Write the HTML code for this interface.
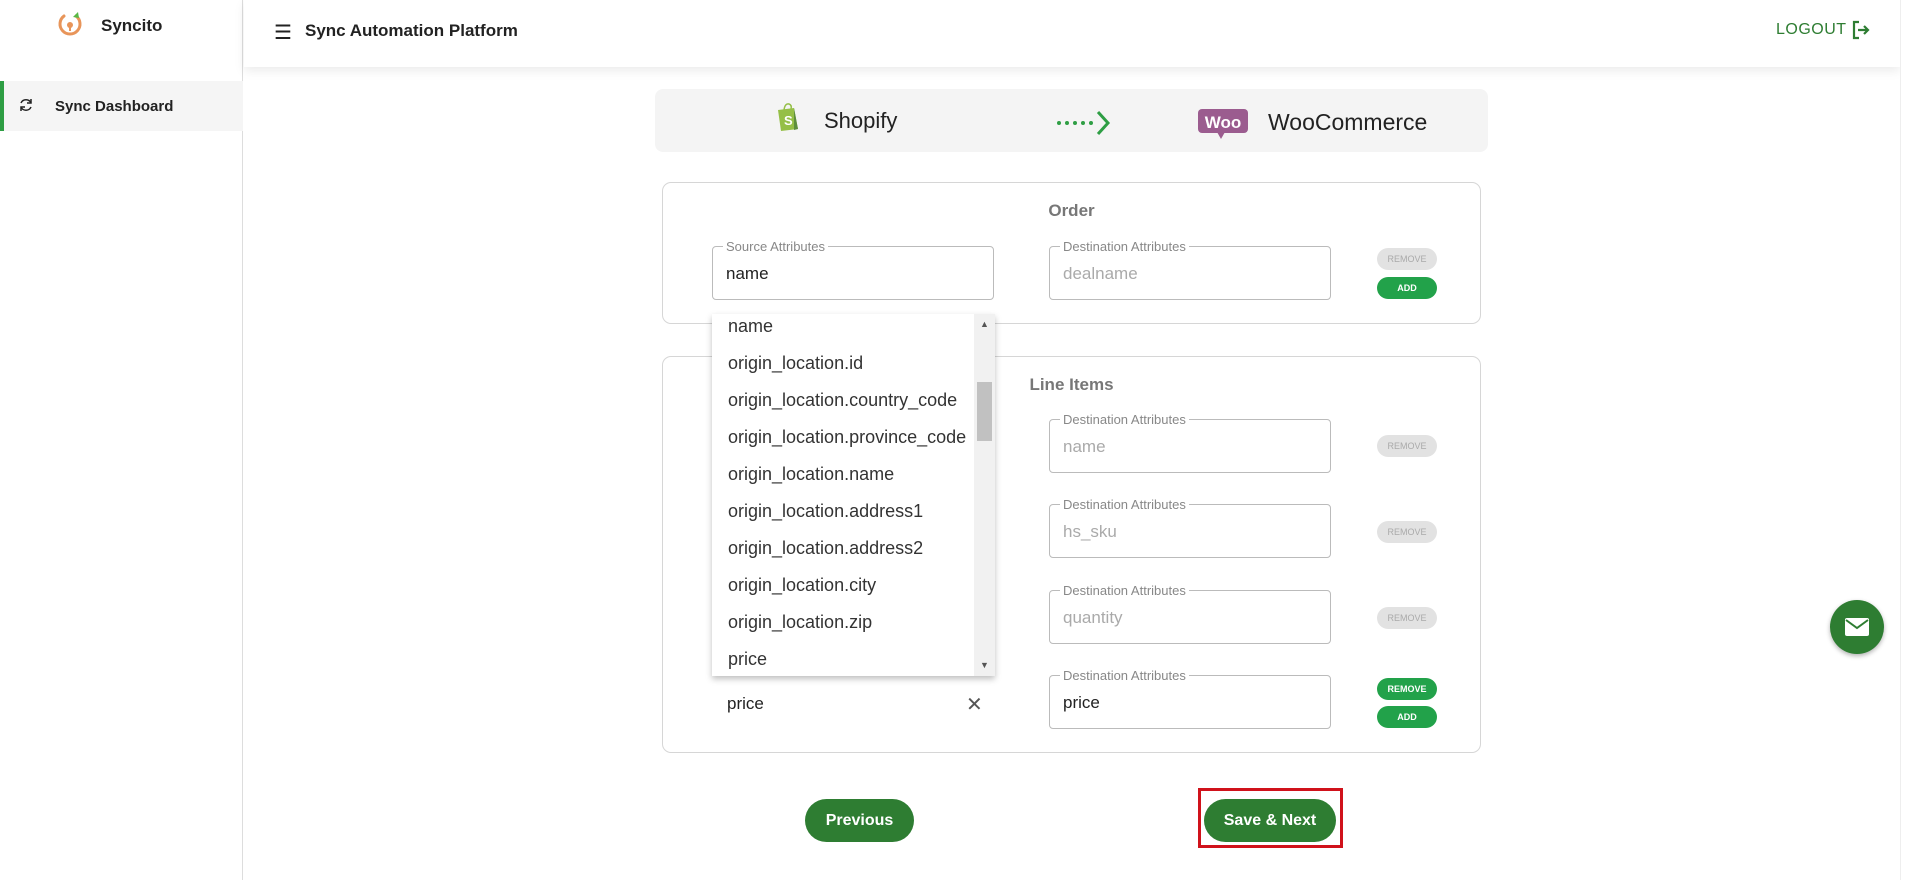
<!DOCTYPE html>
<html><head><meta charset="utf-8"><style>
*{box-sizing:border-box;margin:0;padding:0}
body{width:1916px;height:880px;overflow:hidden;background:#fff;font-family:"Liberation Sans",Arial,sans-serif;position:relative;color:#222}
.abs{position:absolute}
.side{left:0;top:0;width:243px;height:880px;border-right:1px solid #ddd;background:#fff}
.hdr{left:244px;top:0;width:1656px;height:67px;background:#fff;box-shadow:0 4px 10px rgba(0,0,0,.08)}
.field{position:absolute;border:1px solid #bbb;border-radius:4px;height:54px;width:282px}
.field .lab{position:absolute;top:-8px;left:10px;background:#fff;padding:0 3px;font-size:13px;color:#888;line-height:15px}
.field .val{position:absolute;left:13px;top:17px;font-size:17px;color:#222}
.field.dis .val{color:#aaa}
.btn{position:absolute;width:60px;height:22px;border-radius:11px;font-size:9px;font-weight:bold;color:#fff;text-align:center;line-height:22px;background:#22a24a}
.btn.g{background:#e2e2e2;color:#aaa;font-weight:normal}
.card{position:absolute;left:662px;width:819px;border:1px solid #d6d6d6;border-radius:9px;background:#fff}
.ttl{position:absolute;left:0;width:100%;text-align:center;font-size:17px;font-weight:bold;color:#777}
.dd{left:712px;top:314px;width:283px;height:362px;background:#fff;box-shadow:0 3px 6px rgba(0,0,0,.25);overflow:hidden}
.dd div.it{position:absolute;left:16px;font-size:18px;color:#333;white-space:nowrap}
.pb{position:absolute;height:43px;border-radius:22px;background:#2e7d32;color:#fff;font-weight:bold;font-size:16px;text-align:center;line-height:43px}
</style></head><body>
<div class="abs side"></div>
<svg class="abs" style="left:56px;top:10px" width="30" height="28" viewBox="0 0 30 28"><path d="M8 6 A10 10 0 1 0 20 6" fill="none" stroke="#e8955a" stroke-width="3" stroke-linecap="round"/><circle cx="14" cy="15" r="3" fill="#e8955a"/><rect x="13" y="15" width="2" height="6" fill="#e8955a"/><path d="M17 7 L22 2 L23 8 Z" fill="#58b947"/></svg>
<div class="abs" style="left:101px;top:16px;font-size:17px;font-weight:bold">Syncito</div>
<div class="abs" style="left:0;top:81px;width:243px;height:50px;background:#f5f5f5"></div>
<div class="abs" style="left:0;top:81px;width:4px;height:50px;background:#2e9e44"></div>
<svg class="abs" style="left:18px;top:97px" width="16" height="16" viewBox="0 0 16 16"><path d="M13 6 A5.5 5.5 0 0 0 3 6 M3 10 A5.5 5.5 0 0 0 13 10" fill="none" stroke="#222" stroke-width="1.5"/><path d="M13 2 V6 H9 M3 14 V10 H7" fill="none" stroke="#222" stroke-width="1.5"/></svg>
<div class="abs" style="left:55px;top:98px;font-size:15px;font-weight:bold">Sync Dashboard</div>

<div class="abs hdr"></div>
<div class="abs" style="left:274px;top:20px;font-size:20px">&#9776;</div>
<div class="abs" style="left:305px;top:21px;font-size:17px;font-weight:bold">Sync Automation Platform</div>
<div class="abs" style="left:1776px;top:21px;font-size:16px;color:#2e7d32;letter-spacing:.5px">LOGOUT</div>
<svg class="abs" style="left:1851px;top:20px" width="20" height="20" viewBox="0 0 20 20"><path d="M8 2 H3 V18 H8" fill="none" stroke="#2e7d32" stroke-width="2.2"/><path d="M7 10 H17 M13 6 L17 10 L13 14" fill="none" stroke="#2e7d32" stroke-width="2.2"/></svg>

<div class="abs" style="left:655px;top:89px;width:833px;height:63px;background:#f4f4f4;border-radius:8px"></div>
<svg class="abs" style="left:775px;top:102px" width="26" height="30" viewBox="0 0 26 30"><path d="M3 8 L19 6 L23 27 L6 29 Z" fill="#95bf47"/><path d="M19 6 L23 27 L19 28 Z" fill="#5e8e3e"/><path d="M9 8 Q10 1 14 2 Q17 3 16 7" fill="none" stroke="#95bf47" stroke-width="1.5"/><text x="9" y="23" font-size="13" font-weight="bold" fill="#fff" font-family="Liberation Sans">S</text></svg>
<div class="abs" style="left:824px;top:108px;font-size:22px">Shopify</div>
<svg class="abs" style="left:1056px;top:108px" width="58" height="30" viewBox="0 0 58 30"><g fill="#2e9e44"><circle cx="3" cy="15" r="2"/><circle cx="11" cy="15" r="2"/><circle cx="19" cy="15" r="2"/><circle cx="27" cy="15" r="2"/><circle cx="35" cy="15" r="2"/></g><path d="M42 4 L52 15 L42 26" fill="none" stroke="#2e9e44" stroke-width="3"/></svg>
<svg class="abs" style="left:1197px;top:108px" width="52" height="32" viewBox="0 0 52 32"><rect x="1" y="1" width="50" height="24" rx="4" fill="#9b5c8f"/><path d="M20 24 L24 31 L28 24Z" fill="#9b5c8f"/><text x="26" y="20" text-anchor="middle" font-size="17" font-weight="bold" fill="#fff" font-family="Liberation Sans">Woo</text></svg>
<div class="abs" style="left:1268px;top:109px;font-size:23px;color:#222">WooCommerce</div>

<div class="card" style="top:182px;height:142px">
<div class="ttl" style="top:18px">Order</div>
</div>
<div class="field" style="left:712px;top:246px"><span class="lab">Source Attributes</span><span class="val">name</span></div>
<div class="field dis" style="left:1049px;top:246px"><span class="lab">Destination Attributes</span><span class="val">dealname</span></div>
<div class="btn g" style="left:1377px;top:248px">REMOVE</div>
<div class="btn" style="left:1377px;top:277px">ADD</div>

<div class="card" style="top:356px;height:397px">
<div class="ttl" style="top:18px">Line Items</div>
</div>
<div class="field dis" style="left:1049px;top:419px"><span class="lab">Destination Attributes</span><span class="val">name</span></div>
<div class="field dis" style="left:1049px;top:504px"><span class="lab">Destination Attributes</span><span class="val">hs_sku</span></div>
<div class="field dis" style="left:1049px;top:590px"><span class="lab">Destination Attributes</span><span class="val">quantity</span></div>
<div class="field" style="left:1049px;top:675px"><span class="lab">Destination Attributes</span><span class="val">price</span></div>
<div class="btn g" style="left:1377px;top:435px">REMOVE</div>
<div class="btn g" style="left:1377px;top:521px">REMOVE</div>
<div class="btn g" style="left:1377px;top:607px">REMOVE</div>
<div class="btn" style="left:1377px;top:678px">REMOVE</div>
<div class="btn" style="left:1377px;top:706px">ADD</div>
<div class="abs" style="left:727px;top:694px;font-size:17px">price</div>
<div class="abs" style="left:966px;top:692px;font-size:20px;color:#555">&#10005;</div>

<div class="abs dd">
<div class="it" style="top:2px">name</div>
<div class="it" style="top:39px">origin_location.id</div>
<div class="it" style="top:76px">origin_location.country_code</div>
<div class="it" style="top:113px">origin_location.province_code</div>
<div class="it" style="top:150px">origin_location.name</div>
<div class="it" style="top:187px">origin_location.address1</div>
<div class="it" style="top:224px">origin_location.address2</div>
<div class="it" style="top:261px">origin_location.city</div>
<div class="it" style="top:298px">origin_location.zip</div>
<div class="it" style="top:335px">price</div>
<div class="abs" style="left:262px;top:0;width:21px;height:362px;background:#f1f1f1"></div>
<div class="abs" style="left:265px;top:68px;width:15px;height:59px;background:#c1c1c1"></div>
<div class="abs" style="left:268px;top:5px;font-size:9px;color:#555">&#9650;</div>
<div class="abs" style="left:268px;top:346px;font-size:9px;color:#555">&#9660;</div>
</div>

<div class="pb" style="left:805px;top:799px;width:109px">Previous</div>
<div class="abs" style="left:1198px;top:788px;width:145px;height:60px;border:3px solid #d0121b"></div>
<div class="pb" style="left:1204px;top:799px;width:132px">Save &amp; Next</div>

<div class="abs" style="left:1830px;top:600px;width:54px;height:54px;border-radius:50%;background:#2e7d32;box-shadow:0 2px 5px rgba(0,0,0,.3)"></div>
<svg class="abs" style="left:1843px;top:615px" width="28" height="24" viewBox="0 0 28 24"><rect x="2" y="3" width="24" height="18" rx="2" fill="#fff"/><path d="M3 5 L14 13 L25 5" fill="none" stroke="#2e7d32" stroke-width="2"/></svg>
<div class="abs" style="left:1900px;top:0;width:16px;height:880px;background:#fff;border-left:1px solid #eee"></div>
</body></html>
